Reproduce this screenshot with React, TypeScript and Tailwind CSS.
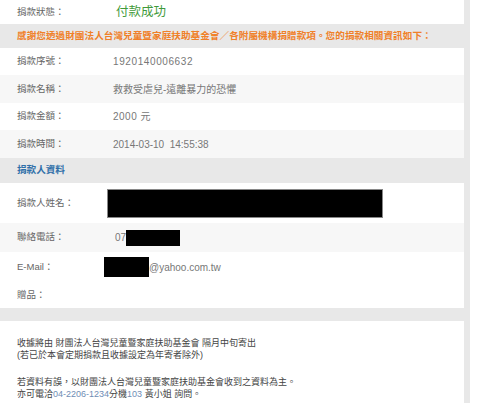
import React from "react"

const font = "font-['Liberation_Sans','Noto_Sans_CJK_TC',sans-serif]"

function Row({
  label,
  shade,
  h,
  children,
}: {
  label: string
  shade?: boolean
  h: string
  children?: React.ReactNode
}) {
  return (
    <div className={`flex items-center w-[464px] ${h} ${shade ? "bg-[#f7f7f7]" : "bg-white"}`}>
      <div className="w-[113px] pl-[17px] text-[9.5px] text-[#666]">{label}</div>
      <div className="flex items-center text-[10px] text-[#777]">{children}</div>
    </div>
  )
}

export default function App() {
  return (
    <div className={`w-[480px] h-[403px] bg-white overflow-hidden ${font}`}>
      <div className="w-[470px] bg-[#e8e8e8]">
        <div className="flex items-center w-[464px] h-[24px] bg-white">
          <div className="w-[113px] pl-[17px] text-[9.5px] text-[#666]">捐款狀態：</div>
          <div className="pl-[3px] text-[12.5px] text-[#3f9a3a]">付款成功</div>
        </div>

        {/* thank-you band */}
        <div className="flex items-center h-[24px] pl-[17px] text-[9.6px] font-bold text-[#f08028] tracking-[0.05px]">
          感謝您透過財團法人台灣兒童暨家庭扶助基金會／各附屬機構捐贈款項。您的捐款相關資訊如下：
        </div>

        <Row label="捐款序號：" h="h-[27px]">
          <span className="tracking-[0.6px]">1920140006632</span>
        </Row>
        <Row label="捐款名稱：" h="h-[28px]" shade>
          救救受虐兒-遠離暴力的恐懼
        </Row>
        <Row label="捐款金額：" h="h-[27px]">
          <span className="tracking-[0.5px]">2000 元</span>
        </Row>
        <Row label="捐款時間：" h="h-[28px]" shade>
          2014-03-10&nbsp;&nbsp;14:55:38
        </Row>

        <div className="flex items-center h-[25px] pl-[17px] text-[9.6px] font-bold text-[#2f6fa9]">
          捐款人資料
        </div>

        <Row label="捐款人姓名：" h="h-[40px]">
          <div className="-ml-[6px] w-[276px] h-[29px] bg-black border border-[#888]" />
        </Row>
        <Row label="聯絡電話：" h="h-[29px]" shade>
          <span className="ml-[2px]">07</span>
          <div className="w-[54px] h-[16px] bg-black" />
        </Row>
        <Row label="E-Mail：" h="h-[30px]">
          <div className="-ml-[9px] w-[45px] h-[20px] bg-black" />
          <span>@yahoo.com.tw</span>
        </Row>
        <Row label="贈品：" h="h-[26px]" />

        <div className="h-[13px]" />

        <div className="w-[464px] h-[82px] bg-white pl-[17px] pt-[16px] text-[9px] leading-[12px] text-[#444]">
          <p>收據將由 財團法人台灣兒童暨家庭扶助基金會 隔月中旬寄出</p>
          <p>(若已於本會定期捐款且收據設定為年寄者除外)</p>
          <p className="mt-[15px]">若資料有誤，以財團法人台灣兒童暨家庭扶助基金會收到之資料為主。</p>
          <p>
            亦可電洽<span className="text-[#6f8db5]">04-2206-1234</span>分機<span className="text-[#6f8db5]">103</span> 黃小姐 詢問。
          </p>
        </div>
      </div>
    </div>
  )
}
